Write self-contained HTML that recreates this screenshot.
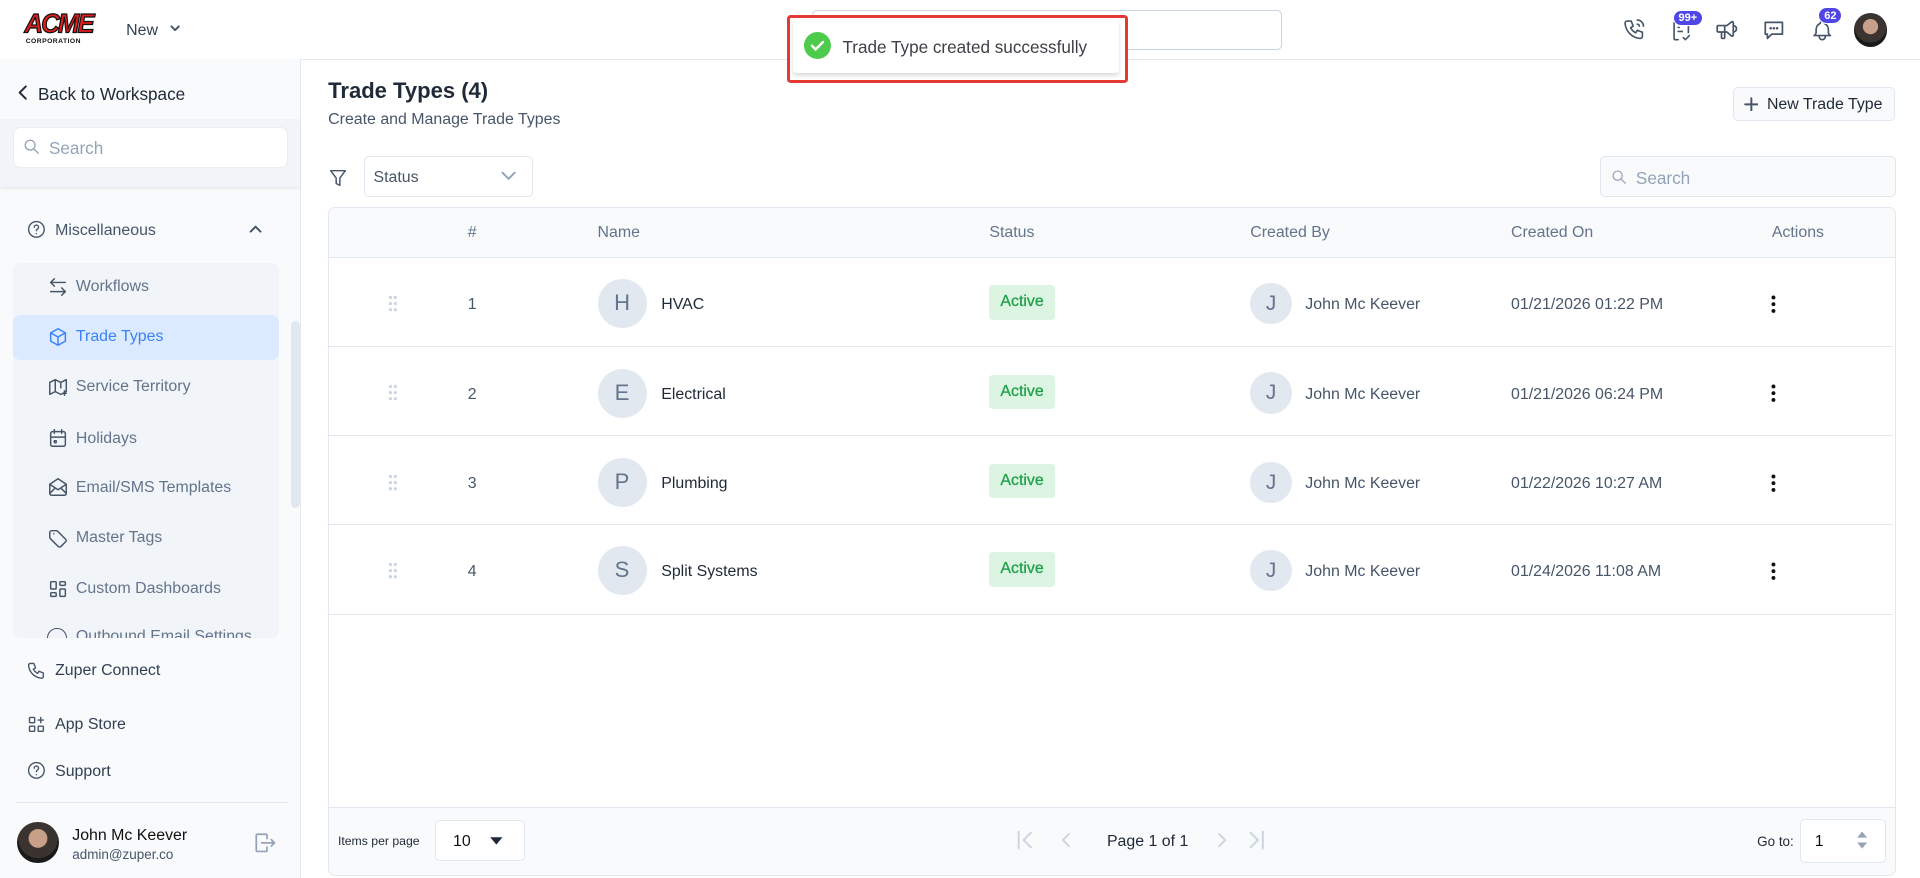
<!DOCTYPE html>
<html><head><meta charset="utf-8"><style>
html{zoom:1.22449}
*{box-sizing:border-box;margin:0;padding:0}
body{width:1568px;height:717px;overflow:hidden;background:#fff;font-family:"Liberation Sans",Arial,sans-serif;color:#1f2937;position:relative}
.a{position:absolute}
svg{display:block}
.ic{stroke:#475569;fill:none;stroke-width:1.6;stroke-linecap:round;stroke-linejoin:round}
.side{left:0;top:48px;width:246px;height:669px;background:#f8fafc;border-right:1px solid #e2e8f0}
.si{left:62px;font-size:13px;color:#64748b}
.sico{left:38px}
.hd{font-size:13px;color:#64748b;top:183px}
.row{left:269px;width:1277px;height:73px;border-bottom:1px solid #e2e8f0}
.av{width:40px;height:40px;border-radius:50%;background:#e2e8f0;color:#64748b;font-size:18px;text-align:center;line-height:40px}
.badge{background:#dcf5e3;color:#22a04b;font-size:13px;padding:0 9px;height:28px;line-height:28px;border-radius:3px;-webkit-text-stroke:0.25px #22a04b}
.cb{width:34px;height:34px;border-radius:50%;background:#e2e8f0;color:#64748b;font-size:17px;text-align:center;line-height:34px}
.t{font-size:13px;color:#475569}
</style></head><body>
<!-- header -->
<div class="a" style="left:0;top:0;width:1568px;height:49px;border-bottom:1px solid #e2e8f0"></div>
<div class="a" style="left:20px;top:8px;font:900 italic 21px 'Liberation Sans';color:#e21d1d;letter-spacing:-1.5px;-webkit-text-stroke:1px #111;transform:scaleY(1.05)">ACME</div>
<div class="a" style="left:21px;top:31px;font:bold 5.5px 'Liberation Sans';color:#111;letter-spacing:0.4px">CORPORATION</div>
<div class="a" style="left:103px;top:18px;font-size:13px;color:#334155">New</div>
<svg class="a ic" style="left:138px;top:20px" width="10" height="8" viewBox="0 0 10 8"><path d="M2 2l3 3 3-3"/></svg>
<div class="a" style="left:663px;top:8px;width:384px;height:33px;border:1px solid #cbd5e1;border-radius:4px"></div>
<!-- top icons -->
<svg class="a ic" style="left:1325px;top:14px" width="20" height="20" viewBox="0 0 24 24"><path d="M5 4h4l2 5-2.5 1.5a11 11 0 005 5L15 13l5 2v4a2 2 0 01-2 2A16 16 0 013 6a2 2 0 012-2M15 3a6 6 0 016 6M15 7a2 2 0 012 2"/></svg>
<svg class="a ic" style="left:1363px;top:14px" width="20" height="22" viewBox="0 0 24 24"><path d="M9 21H6a1 1 0 01-1-1V5a1 1 0 011-1h12a1 1 0 011 1v9M9 9h1M9 13h4M14 19l2 2 4-4"/></svg>
<div class="a" style="left:1366px;top:8px;background:#4f46e5;color:#fff;font:bold 9px 'Liberation Sans';padding:1px 4px;border-radius:8px;border:1px solid #fff">99+</div>
<svg class="a ic" style="left:1400px;top:14px" width="21" height="21" viewBox="0 0 24 24"><path d="M18 8a3 3 0 010 6M10 8v11a1 1 0 01-1 1H8a1 1 0 01-1-1v-5M12 8l4.5-3.5A1 1 0 0118 5v12a1 1 0 01-1.5.8L12 14H4a1 1 0 01-1-1V9a1 1 0 011-1h8"/></svg>
<svg class="a ic" style="left:1438px;top:14px" width="21" height="21" viewBox="0 0 24 24"><path d="M4 5h16v11H10l-4 4v-4H4z"/><path d="M9 10.5h.01M12 10.5h.01M15 10.5h.01" stroke-width="2.4"/></svg>
<svg class="a ic" style="left:1478px;top:14px" width="20" height="22" viewBox="0 0 24 24"><path d="M10 5a2 2 0 014 0 7 7 0 014 6v3a4 4 0 002 3H4a4 4 0 002-3v-3a7 7 0 014-6M9 17v1a3 3 0 006 0v-1"/></svg>
<div class="a" style="left:1485px;top:6px;background:#4f46e5;color:#fff;font:bold 9px 'Liberation Sans';padding:1px 4px;border-radius:8px;border:1px solid #fff">62</div>
<div class="a" style="left:1514px;top:11px;width:27px;height:27px;border-radius:50%;background:radial-gradient(circle at 50% 40%,#c8a08a 0 28%,#3a3330 30% 60%,#1a1a1a 62%)"></div>
<!-- toast -->
<div class="a" style="left:643px;top:12px;width:278px;height:56px;border:3px solid #e53935;border-radius:3px;background:#fff"></div>
<div class="a" style="left:648px;top:16px;width:266px;height:44px;background:#fff;box-shadow:0 2px 4px rgba(0,0,0,.15);border-radius:3px"></div>
<svg class="a" style="left:657px;top:26px" width="22" height="22" viewBox="0 0 22 22"><circle cx="11" cy="11" r="11" fill="#4ccb4c"/><path d="M6.5 11.2l3 3 6-6" stroke="#fff" stroke-width="2" fill="none" stroke-linecap="round"/></svg>
<div class="a" style="left:688px;top:30px;font-size:14px;color:#3f3f46">Trade Type created successfully</div>
<!-- sidebar -->
<div class="a side"></div>
<svg class="a ic" style="left:13px;top:69px" width="12" height="14" viewBox="0 0 12 14"><path d="M8 2L3 7l5 5" stroke="#1f2937"/></svg>
<div class="a" style="left:31px;top:69px;font-size:14px;color:#1f2937">Back to Workspace</div>
<div class="a" style="left:0;top:97px;width:245px;height:56px;background:#f1f5f9;box-shadow:0 2px 2px rgba(0,0,0,.06)"></div>
<div class="a" style="left:11px;top:104px;width:224px;height:33px;background:#fff;border-radius:6px;border:1px solid #e8edf2"></div>
<svg class="a ic" style="left:18px;top:112px" width="16" height="16" viewBox="0 0 24 24"><circle cx="10" cy="10" r="6" stroke="#94a3b8"/><path d="M15 15l5 5" stroke="#94a3b8"/></svg>
<div class="a" style="left:40px;top:113px;font-size:14px;color:#94a3b8">Search</div>
<svg class="a ic" style="left:21px;top:179px" width="17" height="17" viewBox="0 0 24 24"><circle cx="12" cy="12" r="9"/><path d="M9.5 9.5a2.5 2.5 0 115 0c0 2-2.5 2-2.5 4M12 17h.01"/></svg>
<div class="a" style="left:45px;top:181px;font-size:13px;color:#475569">Miscellaneous</div>
<svg class="a ic" style="left:202px;top:182px" width="14" height="10" viewBox="0 0 14 10"><path d="M3 7l4-4 4 4"/></svg>
<div class="a" style="left:11px;top:215px;width:217px;height:306px;background:#f1f5f9;border-radius:6px;overflow:hidden">
 <div class="a" style="left:0;top:42px;width:217px;height:37px;background:#dbeafe;border-radius:6px"></div>
</div>
<div class="a" style="left:238px;top:262px;width:7px;height:153px;background:#e2e8f0;border-radius:4px"></div>
<svg class="a ic sico" style="top:225px" width="18" height="18" viewBox="0 0 24 24"><path d="M20 7H4M8 3L4 7l4 4M4 17h16M16 13l4 4-4 4"/></svg>
<div class="a si" style="top:227px">Workflows</div>
<svg class="a ic sico" style="top:266px;stroke:#3b82f6" width="18" height="18" viewBox="0 0 24 24"><path d="M12 3l8 4.5v9L12 21l-8-4.5v-9zM12 12l8-4.5M12 12v9M12 12L4 7.5"/></svg>
<div class="a si" style="top:268px;color:#3b82f6">Trade Types</div>
<svg class="a ic sico" style="top:307px" width="18" height="18" viewBox="0 0 24 24"><path d="M9 4L3 7v13l6-3 6 3 6-3V4l-6 3zM9 4v13M15 7v6M19 16v5M17 19h4"/></svg>
<div class="a si" style="top:309px">Service Territory</div>
<svg class="a ic sico" style="top:349px" width="18" height="18" viewBox="0 0 24 24"><rect x="4" y="5" width="16" height="16" rx="2"/><path d="M16 3v4M8 3v4M4 11h16M8 15h2v2H8z"/></svg>
<div class="a si" style="top:351px">Holidays</div>
<svg class="a ic sico" style="top:389px" width="18" height="18" viewBox="0 0 24 24"><path d="M3 9l9-6 9 6v10a2 2 0 01-2 2H5a2 2 0 01-2-2zM3 9l9 6 9-6M3 19l6-6M15 13l6 6"/></svg>
<div class="a si" style="top:391px">Email/SMS Templates</div>
<svg class="a ic sico" style="top:430px" width="18" height="18" viewBox="0 0 24 24"><path d="M7.5 7.5h.01M3 6v5.2a2 2 0 00.6 1.4l8.7 8.7a2 2 0 002.8 0l5.2-5.2a2 2 0 000-2.8L11.6 4.6A2 2 0 0010.2 4H5a2 2 0 00-2 2z"/></svg>
<div class="a si" style="top:432px">Master Tags</div>
<svg class="a ic sico" style="top:472px" width="18" height="18" viewBox="0 0 24 24"><rect x="4" y="4" width="6" height="8" rx="1"/><rect x="4" y="16" width="6" height="4" rx="1"/><rect x="14" y="12" width="6" height="8" rx="1"/><rect x="14" y="4" width="6" height="4" rx="1"/></svg>
<div class="a si" style="top:474px">Custom Dashboards</div>
<div class="a" style="left:11px;top:505px;width:217px;height:16px;overflow:hidden"><div class="a" style="left:51px;top:8px;font-size:13px;color:#64748b">Outbound Email Settings</div><div class="a" style="left:27px;top:8px;width:17px;height:17px;border:1.6px solid #475569;border-radius:50%"></div></div>
<svg class="a ic" style="left:21px;top:539px" width="17" height="17" viewBox="0 0 24 24"><path d="M5 4h4l2 5-2.5 1.5a11 11 0 005 5L15 13l5 2v4a2 2 0 01-2 2A16 16 0 013 6a2 2 0 012-2"/></svg>
<div class="a" style="left:45px;top:541px;font-size:13px;color:#334155">Zuper Connect</div>
<svg class="a ic" style="left:21px;top:583px" width="17" height="17" viewBox="0 0 24 24"><rect x="4" y="4" width="6" height="6" rx="1"/><rect x="4" y="14" width="6" height="6" rx="1"/><rect x="14" y="14" width="6" height="6" rx="1"/><path d="M14 7h6M17 4v6"/></svg>
<div class="a" style="left:45px;top:585px;font-size:13px;color:#334155">App Store</div>
<svg class="a ic" style="left:21px;top:621px" width="17" height="17" viewBox="0 0 24 24"><circle cx="12" cy="12" r="9"/><path d="M9.5 9.5a2.5 2.5 0 115 0c0 2-2.5 2-2.5 4M12 17h.01"/></svg>
<div class="a" style="left:45px;top:623px;font-size:13px;color:#334155">Support</div>
<div class="a" style="left:13px;top:655px;width:222px;height:1px;background:#e2e8f0"></div>
<div class="a" style="left:14px;top:671px;width:34px;height:34px;border-radius:50%;background:radial-gradient(circle at 50% 40%,#c8a08a 0 28%,#3a3330 30% 60%,#1a1a1a 62%)"></div>
<div class="a" style="left:59px;top:675px;font-size:13px;color:#111">John Mc Keever</div>
<div class="a" style="left:59px;top:692px;font-size:11px;color:#475569">admin@zuper.co</div>
<svg class="a ic" style="left:206px;top:678px" width="21" height="21" viewBox="0 0 24 24"><path d="M14 8V5a1 1 0 00-1-1H5a1 1 0 00-1 1v14a1 1 0 001 1h8a1 1 0 001-1v-3M9 12h12l-3-3M21 12l-3 3" stroke="#94a3b8"/></svg>
<!-- main -->
<div class="a" style="left:268px;top:64px;font-size:18px;font-weight:bold;color:#1f2937">Trade Types (4)</div>
<div class="a" style="left:268px;top:91px;font-size:13px;color:#475569">Create and Manage Trade Types</div>
<div class="a" style="left:1415px;top:71px;width:133px;height:28px;border:1px solid #e2e8f0;border-radius:4px;background:#f8fafc"></div>
<svg class="a ic" style="left:1424px;top:79px" width="12" height="12" viewBox="0 0 12 12"><path d="M6 1v10M1 6h10"/></svg>
<div class="a" style="left:1443px;top:78px;font-size:13px;color:#1f2937">New Trade Type</div>
<svg class="a ic" style="left:267px;top:136px" width="18" height="18" viewBox="0 0 24 24"><path d="M4 4h16l-6 8v8l-4-2v-6z"/></svg>
<div class="a" style="left:297px;top:127px;width:138px;height:34px;border:1px solid #e2e8f0;border-radius:4px"></div>
<div class="a" style="left:305px;top:138px;font-size:13px;color:#475569">Status</div>
<svg class="a ic" style="left:408px;top:138px" width="14" height="10" viewBox="0 0 14 10"><path d="M2 3l5 5 5-5" stroke="#94a3b8"/></svg>
<div class="a" style="left:1307px;top:127px;width:241px;height:34px;border:1px solid #e2e8f0;border-radius:4px;background:#f8fafc"></div>
<svg class="a ic" style="left:1315px;top:137px" width="15" height="15" viewBox="0 0 24 24"><circle cx="10" cy="10" r="6" stroke="#94a3b8"/><path d="M15 15l5 5" stroke="#94a3b8"/></svg>
<div class="a" style="left:1336px;top:137px;font-size:14px;color:#94a3b8">Search</div>
<!-- table -->
<div class="a" style="left:268px;top:169px;width:1280px;height:546px;border:1px solid #e2e8f0;border-radius:6px;overflow:hidden">
 <div class="a" style="left:0;top:0;width:1280px;height:41px;background:#f8fafc;border-bottom:1px solid #e2e8f0"></div>
 <div class="a" style="left:0;top:489px;width:1280px;height:57px;background:#f8fafc;border-top:1px solid #e2e8f0"></div>
</div>
<div class="a hd" style="left:382px">#</div>
<div class="a hd" style="left:488px">Name</div>
<div class="a hd" style="left:808px">Status</div>
<div class="a hd" style="left:1021px">Created By</div>
<div class="a hd" style="left:1234px">Created On</div>
<div class="a hd" style="left:1447px">Actions</div>

<div class="a row" style="top:210px"></div>
<div class="a row" style="top:283px"></div>
<div class="a row" style="top:356px"></div>
<div class="a row" style="top:429px"></div>

<div class="a" style="left:0;top:228px;width:1568px">
 <svg class="a" style="left:317px;top:13px" width="8" height="14"><g fill="#cbd5e1"><circle cx="2" cy="2" r="1.3"/><circle cx="6" cy="2" r="1.3"/><circle cx="2" cy="7" r="1.3"/><circle cx="6" cy="7" r="1.3"/><circle cx="2" cy="12" r="1.3"/><circle cx="6" cy="12" r="1.3"/></g></svg>
 <div class="a t" style="left:382px;top:14px">1</div>
 <div class="a av" style="left:488px;top:0">H</div>
 <div class="a" style="left:540px;top:14px;font-size:13px;color:#1f2937">HVAC</div>
 <div class="a badge" style="left:808px;top:5px">Active</div>
 <div class="a cb" style="left:1021px;top:3px">J</div>
 <div class="a t" style="left:1066px;top:14px">John Mc Keever</div>
 <div class="a t" style="left:1234px;top:14px">01/21/2026 01:22 PM</div>
 <svg class="a" style="left:1446px;top:13px" width="4" height="15"><g fill="#111"><circle cx="2" cy="2" r="1.6"/><circle cx="2" cy="7.5" r="1.6"/><circle cx="2" cy="13" r="1.6"/></g></svg>
</div>
<div class="a" style="left:0;top:301px;width:1568px">
 <svg class="a" style="left:317px;top:13px" width="8" height="14"><g fill="#cbd5e1"><circle cx="2" cy="2" r="1.3"/><circle cx="6" cy="2" r="1.3"/><circle cx="2" cy="7" r="1.3"/><circle cx="6" cy="7" r="1.3"/><circle cx="2" cy="12" r="1.3"/><circle cx="6" cy="12" r="1.3"/></g></svg>
 <div class="a t" style="left:382px;top:14px">2</div>
 <div class="a av" style="left:488px;top:0">E</div>
 <div class="a" style="left:540px;top:14px;font-size:13px;color:#1f2937">Electrical</div>
 <div class="a badge" style="left:808px;top:5px">Active</div>
 <div class="a cb" style="left:1021px;top:3px">J</div>
 <div class="a t" style="left:1066px;top:14px">John Mc Keever</div>
 <div class="a t" style="left:1234px;top:14px">01/21/2026 06:24 PM</div>
 <svg class="a" style="left:1446px;top:13px" width="4" height="15"><g fill="#111"><circle cx="2" cy="2" r="1.6"/><circle cx="2" cy="7.5" r="1.6"/><circle cx="2" cy="13" r="1.6"/></g></svg>
</div>
<div class="a" style="left:0;top:374px;width:1568px">
 <svg class="a" style="left:317px;top:13px" width="8" height="14"><g fill="#cbd5e1"><circle cx="2" cy="2" r="1.3"/><circle cx="6" cy="2" r="1.3"/><circle cx="2" cy="7" r="1.3"/><circle cx="6" cy="7" r="1.3"/><circle cx="2" cy="12" r="1.3"/><circle cx="6" cy="12" r="1.3"/></g></svg>
 <div class="a t" style="left:382px;top:14px">3</div>
 <div class="a av" style="left:488px;top:0">P</div>
 <div class="a" style="left:540px;top:14px;font-size:13px;color:#1f2937">Plumbing</div>
 <div class="a badge" style="left:808px;top:5px">Active</div>
 <div class="a cb" style="left:1021px;top:3px">J</div>
 <div class="a t" style="left:1066px;top:14px">John Mc Keever</div>
 <div class="a t" style="left:1234px;top:14px">01/22/2026 10:27 AM</div>
 <svg class="a" style="left:1446px;top:13px" width="4" height="15"><g fill="#111"><circle cx="2" cy="2" r="1.6"/><circle cx="2" cy="7.5" r="1.6"/><circle cx="2" cy="13" r="1.6"/></g></svg>
</div>
<div class="a" style="left:0;top:446px;width:1568px">
 <svg class="a" style="left:317px;top:13px" width="8" height="14"><g fill="#cbd5e1"><circle cx="2" cy="2" r="1.3"/><circle cx="6" cy="2" r="1.3"/><circle cx="2" cy="7" r="1.3"/><circle cx="6" cy="7" r="1.3"/><circle cx="2" cy="12" r="1.3"/><circle cx="6" cy="12" r="1.3"/></g></svg>
 <div class="a t" style="left:382px;top:14px">4</div>
 <div class="a av" style="left:488px;top:0">S</div>
 <div class="a" style="left:540px;top:14px;font-size:13px;color:#1f2937">Split Systems</div>
 <div class="a badge" style="left:808px;top:5px">Active</div>
 <div class="a cb" style="left:1021px;top:3px">J</div>
 <div class="a t" style="left:1066px;top:14px">John Mc Keever</div>
 <div class="a t" style="left:1234px;top:14px">01/24/2026 11:08 AM</div>
 <svg class="a" style="left:1446px;top:13px" width="4" height="15"><g fill="#111"><circle cx="2" cy="2" r="1.6"/><circle cx="2" cy="7.5" r="1.6"/><circle cx="2" cy="13" r="1.6"/></g></svg>
</div>
<!-- footer -->
<div class="a" style="left:276px;top:681px;font-size:10px;color:#1f2937">Items per page</div>
<div class="a" style="left:355px;top:670px;width:74px;height:33px;background:#fff;border:1px solid #e2e8f0;border-radius:4px"></div>
<div class="a" style="left:370px;top:680px;font-size:13px;color:#111">10</div>
<svg class="a" style="left:399px;top:683px" width="12" height="8"><path d="M1 1h10L6 7z" fill="#1f2937"/></svg>
<svg class="a ic" style="left:829px;top:677px" width="20" height="18" viewBox="0 0 20 18"><path d="M3 2v14M13 3l-6 6 6 6" stroke="#cbd5e1"/></svg>
<svg class="a ic" style="left:864px;top:677px" width="14" height="18" viewBox="0 0 14 18"><path d="M9 4L4 9l5 5" stroke="#cbd5e1"/></svg>
<div class="a" style="left:904px;top:680px;font-size:13px;color:#1f2937">Page 1 of 1</div>
<svg class="a ic" style="left:991px;top:677px" width="14" height="18" viewBox="0 0 14 18"><path d="M5 4l5 5-5 5" stroke="#cbd5e1"/></svg>
<svg class="a ic" style="left:1014px;top:677px" width="20" height="18" viewBox="0 0 20 18"><path d="M17 2v14M7 3l6 6-6 6" stroke="#cbd5e1"/></svg>
<div class="a" style="left:1435px;top:681px;font-size:11px;color:#1f2937">Go to:</div>
<div class="a" style="left:1470px;top:669px;width:70px;height:36px;background:#fff;border:1px solid #e2e8f0;border-radius:4px"></div>
<div class="a" style="left:1482px;top:680px;font-size:13px;color:#111">1</div>
<svg class="a" style="left:1516px;top:677px" width="10" height="18"><path d="M1 7l4-5 4 5zM1 11l4 5 4-5z" fill="#94a3b8"/></svg>
</body></html>
